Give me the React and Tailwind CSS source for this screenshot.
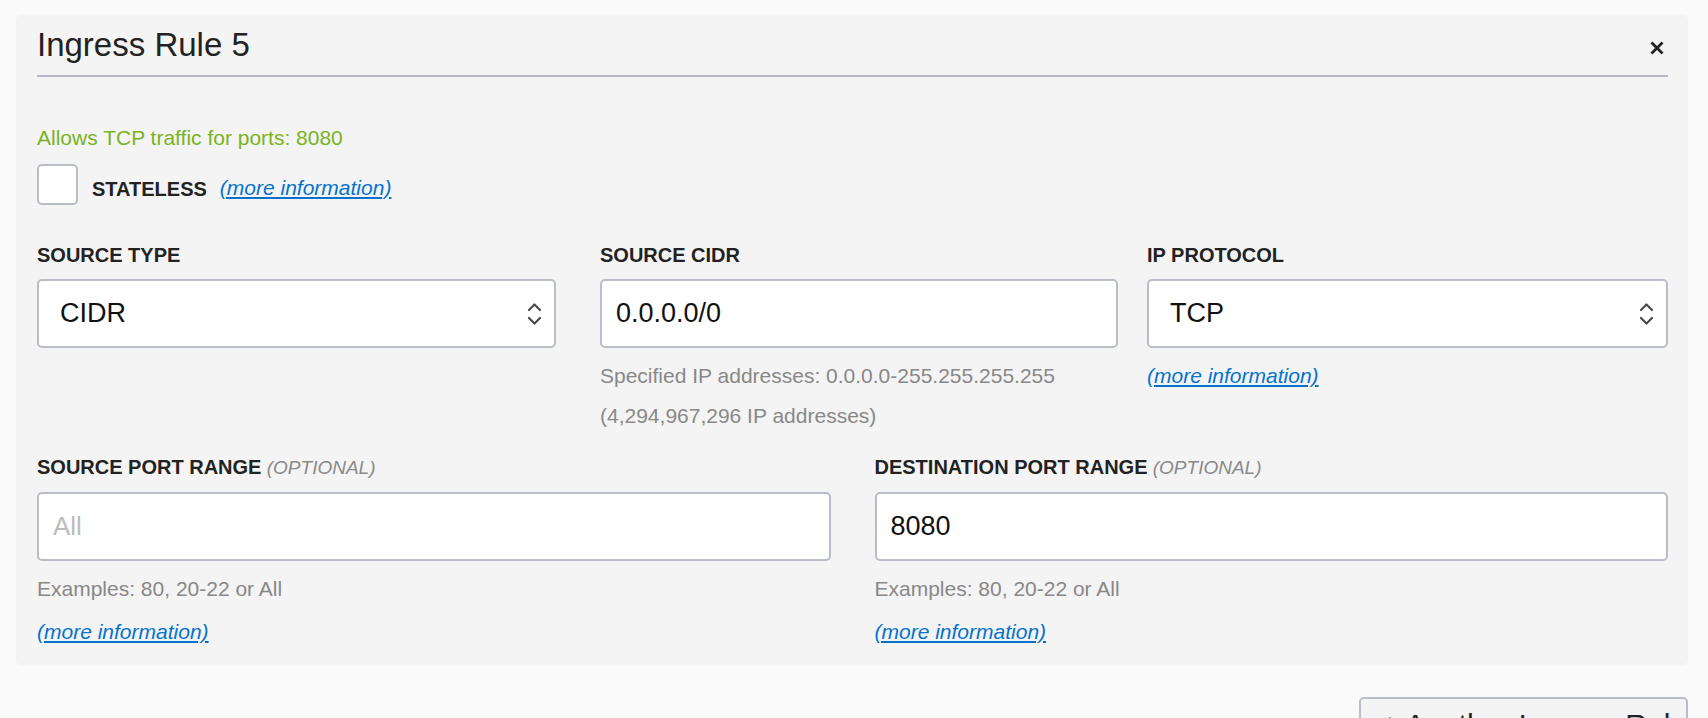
import React from "react";

function Chevrons() {
  return (
    <svg width="15" height="28" viewBox="0 0 15 28" fill="none" stroke="#4a4a4a" strokeWidth="2.2" strokeLinecap="round" strokeLinejoin="round">
      <path d="M2 10 L7.5 4.5 L13 10" />
      <path d="M2 18 L7.5 23.5 L13 18" />
    </svg>
  );
}

function Label({ children, optional }) {
  return (
    <div className="text-[20px] leading-[24px] font-bold text-[#222] whitespace-nowrap">
      {children}
      {optional && (
        <span className="font-normal italic text-[19px] text-[#8a8a8a]"> (OPTIONAL)</span>
      )}
    </div>
  );
}

function SelectBox({ value }) {
  return (
    <div className="mt-[12px] h-[69px] rounded-[5px] border-2 border-[#b9bdc5] bg-white flex items-center justify-between pl-[21px] pr-[12px]">
      <span className="text-[27px] text-[#111]">{value}</span>
      <Chevrons />
    </div>
  );
}

function TextBox({ value, placeholder }) {
  return (
    <div className="mt-[12px] h-[69px] rounded-[5px] border-2 border-[#b9bdc5] bg-white flex items-center pl-[14px]">
      {value ? (
        <span className="text-[27px] text-[#111]">{value}</span>
      ) : (
        <span className="text-[26px] text-[#bcbcbc]">{placeholder}</span>
      )}
    </div>
  );
}

function MoreInfo({ className = "" }) {
  return (
    <a href="#" className={"italic underline text-[#0572ce] text-[21px] " + className}>
      (more information)
    </a>
  );
}

export default function App() {
  return (
    <div className="min-h-screen bg-[#fafafa] pt-[15px] pl-[16px] pr-[20px] font-['Liberation_Sans',Arial,Helvetica,sans-serif] overflow-hidden">
      <div className="rounded-[5px] bg-[#f4f4f4] pl-[21px] pr-[20px] pt-[12px] pb-[11px]">
        {/* header */}
        <div className="flex items-start justify-between border-b-2 border-[#b6b8c6] pb-[12px]">
          <h2 className="text-[33px] leading-[36px] text-[#222]">Ingress Rule 5</h2>
          <button className="mt-[14px] mr-[4px]">
            <svg width="14" height="14" viewBox="0 0 14 14" stroke="#222" strokeWidth="2.8">
              <path d="M1.5 1.5 L12.5 12.5 M12.5 1.5 L1.5 12.5" />
            </svg>
          </button>
        </div>

        <p className="mt-[49px] text-[21px] leading-[24px] text-[#79b31f]">
          Allows TCP traffic for ports: 8080
        </p>

        {/* stateless */}
        <div className="mt-[14px] flex items-center">
          <div className="w-[41px] h-[41px] rounded-[5px] border-2 border-[#b9bdc5] bg-white" />
          <span className="ml-[14px] pt-[8px] text-[20px] leading-[24px] font-bold text-[#222]">STATELESS</span>
          <span className="ml-[13px] pt-[8px] leading-[24px]">
            <MoreInfo />
          </span>
        </div>

        {/* source type / cidr / protocol */}
        <div className="mt-[38px] flex">
          <div className="w-[519px]">
            <Label>SOURCE TYPE</Label>
            <SelectBox value="CIDR" />
          </div>
          <div className="w-[518px] ml-[44px]">
            <Label>SOURCE CIDR</Label>
            <TextBox value="0.0.0.0/0" />
            <div className="mt-2 text-[21px] leading-[40px] text-[#888]">
              <div>Specified IP addresses: 0.0.0.0-255.255.255.255</div>
              <div>(4,294,967,296 IP addresses)</div>
            </div>
          </div>
          <div className="flex-1 ml-[29px]">
            <Label>IP PROTOCOL</Label>
            <SelectBox value="TCP" />
            <div className="mt-2 leading-[40px]">
              <MoreInfo />
            </div>
          </div>
        </div>

        {/* port ranges */}
        <div className="mt-[19px] grid grid-cols-2 gap-x-[44px]">
          <div>
            <Label optional>SOURCE PORT RANGE</Label>
            <TextBox placeholder="All" />
            <div className="mt-2 text-[21px] leading-[40px] text-[#888]">Examples: 80, 20-22 or All</div>
            <div className="mt-[3px] leading-[40px]">
              <MoreInfo />
            </div>
          </div>
          <div>
            <Label optional>DESTINATION PORT RANGE</Label>
            <TextBox value="8080" />
            <div className="mt-2 text-[21px] leading-[40px] text-[#888]">Examples: 80, 20-22 or All</div>
            <div className="mt-[3px] leading-[40px]">
              <MoreInfo />
            </div>
          </div>
        </div>
      </div>

      <div className="mt-[32px] flex justify-end">
        <div className="w-[329px] h-[60px] rounded-[5px] border-2 border-[#b9bdc5] bg-[#f4f4f4] pl-[20px] pt-[10px] overflow-hidden whitespace-nowrap text-[30px] leading-[32px] text-[#222]">
          + Another Ingress Rule
        </div>
      </div>
    </div>
  );
}
